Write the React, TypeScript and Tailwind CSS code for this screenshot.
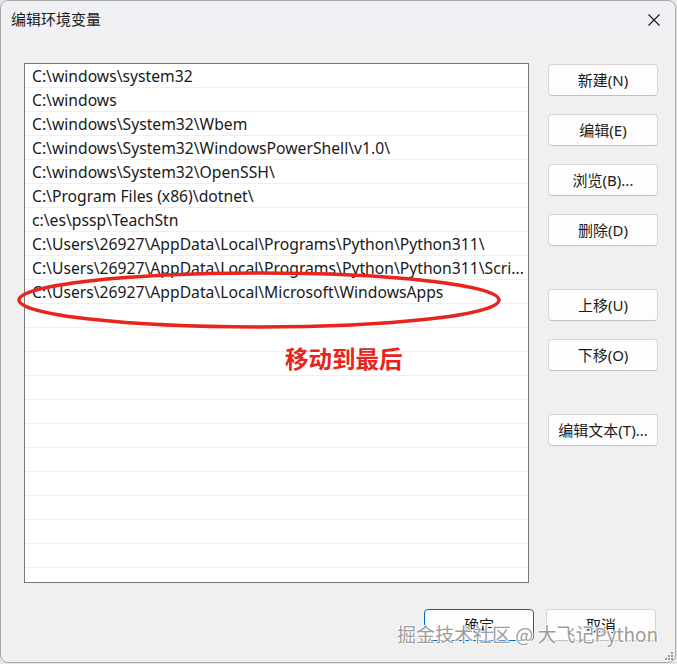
import React from "react";

const rows = [
  "C:\\windows\\system32",
  "C:\\windows",
  "C:\\windows\\System32\\Wbem",
  "C:\\windows\\System32\\WindowsPowerShell\\v1.0\\",
  "C:\\windows\\System32\\OpenSSH\\",
  "C:\\Program Files (x86)\\dotnet\\",
  "c:\\es\\pssp\\TeachStn",
  "C:\\Users\\26927\\AppData\\Local\\Programs\\Python\\Python311\\",
  "C:\\Users\\26927\\AppData\\Local\\Programs\\Python\\Python311\\Scri...",
  "C:\\Users\\26927\\AppData\\Local\\Microsoft\\WindowsApps",
];

const font = { fontFamily: '"Noto Sans", "Noto Sans CJK SC", sans-serif' };

function Btn({ children, className = "", primary = false }: { children: React.ReactNode; className?: string; primary?: boolean }) {
  return (
    <div
      className={`flex h-[32px] w-[110px] items-center justify-center rounded-[4px] bg-[#fdfdfd] text-[15px] text-[#1a1a1a] ${
        primary ? "border border-[#0067c0]" : "border border-[#d6d6d6] border-b-[#c2c2c2]"
      } ${className}`}
    >
      {children}
    </div>
  );
}

export default function App() {
  const all = [...rows, ...Array.from({ length: 12 }, () => "")];
  return (
    <div className="relative h-[664px] w-[677px] overflow-hidden bg-[#e6e6e6]" style={font}>
      <div className="flex h-[663px] w-[676px] flex-col rounded-[8px] border border-[#a8a8a8] bg-[#f0f0f0]">
        {/* title bar */}
        <div className="flex h-[37px] items-center justify-between rounded-t-[8px] bg-[#eff1f4] pl-[10px] pr-[15px]">
          <span className="-mt-[1px] text-[15px] text-[#1a1a1a]">编辑环境变量</span>
          <svg width="12" height="12" viewBox="0 0 12 12" className="mt-[1px]">
            <path d="M0.5 0.5 L11.5 11.5 M11.5 0.5 L0.5 11.5" stroke="#1a1a1a" strokeWidth="1.1" />
          </svg>
        </div>
        <div className="flex pl-[23px] pt-[25px]">
          {/* list */}
          <div className="h-[520px] w-[505px] overflow-hidden border border-[#7a7a7a] bg-white">
            {all.map((r, i) => (
              <div
                key={i}
                className="flex h-[24px] items-center border-b border-[#efefef] pl-[7px] pt-[3px] text-[15.7px] leading-none text-[#1a1a1a] whitespace-nowrap"
              >
                {r}
              </div>
            ))}
          </div>
          {/* buttons */}
          <div className="ml-[19px] flex flex-col pt-[1px]">
            <Btn>新建(N)</Btn>
            <Btn className="mt-[18px]">编辑(E)</Btn>
            <Btn className="mt-[18px]">浏览(B)...</Btn>
            <Btn className="mt-[18px]">删除(D)</Btn>
            <Btn className="mt-[43px]">上移(U)</Btn>
            <Btn className="mt-[18px]">下移(O)</Btn>
            <Btn className="mt-[43px]">编辑文本(T)...</Btn>
          </div>
        </div>
        <div className="flex justify-end gap-[12px] pr-[19px] pt-[26px]">
          <Btn primary>确定</Btn>
          <Btn>取消</Btn>
        </div>
      </div>

      {/* red ellipse annotation */}
      <svg className="absolute left-0 top-0" width="677" height="664" viewBox="0 0 677 664">
        <ellipse cx="259" cy="300" rx="240" ry="27" fill="none" stroke="#e8241c" strokeWidth="3.5" />
      </svg>
      <div
        className="absolute left-[285px] top-[347px] text-[23.5px] font-bold leading-none text-[#e8241c]"
        style={{ fontFamily: '"Noto Sans CJK SC", sans-serif' }}
      >
        移动到最后
      </div>

      {/* watermark */}
      <div
        className="absolute left-[397px] top-[624px] text-[19px] leading-none text-[#8f8f8f]/90"
        style={{
          fontFamily: '"Noto Sans CJK SC", sans-serif',
          textShadow: "1px 0 #fff, -1px 0 #fff, 0 1px #fff, 0 -1px #fff",
        }}
      >
        掘金技术社区 @ 大飞记Python
      </div>

      {/* resize grip */}
      <svg className="absolute right-[3px] bottom-[3px]" width="10" height="10" viewBox="0 0 10 10">
        {[
          [8, 2],
          [5, 5],
          [8, 5],
          [2, 8],
          [5, 8],
          [8, 8],
        ].map(([x, y], i) => (
          <rect key={i} x={x - 1} y={y - 1} width="2" height="2" fill="#9a9a9a" />
        ))}
      </svg>
    </div>
  );
}
